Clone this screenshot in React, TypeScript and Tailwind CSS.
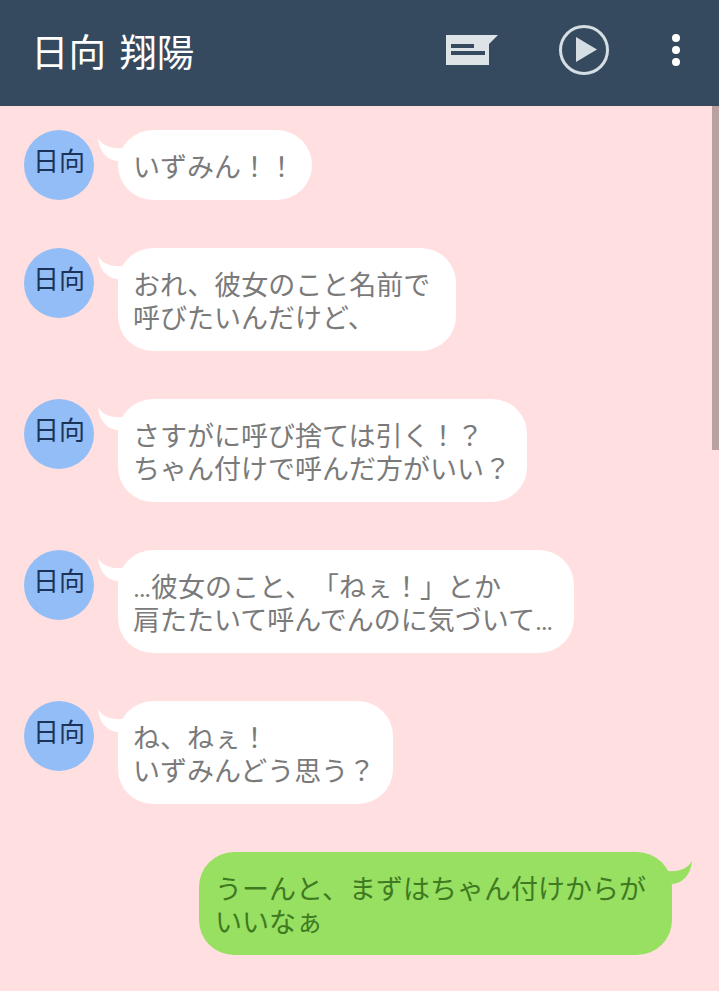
interface Message {
  id: number;
  lines: string[];
  widthClass: string;
}

const messages: Message[] = [
  { id: 1, lines: ['いずみん！！'], widthClass: 'w-[194px]' },
  { id: 2, lines: ['おれ、彼女のこと名前で', '呼びたいんだけど、'], widthClass: 'w-[338px]' },
  { id: 3, lines: ['さすがに呼び捨ては引く！？', 'ちゃん付けで呼んだ方がいい？'], widthClass: 'w-[409px]' },
  { id: 4, lines: ['…彼女のこと、「ねぇ！」とか', '肩たたいて呼んでんのに気づいて…'], widthClass: 'w-[456px]' },
  { id: 5, lines: ['ね、ねぇ！', 'いずみんどう思う？'], widthClass: 'w-[275px]' },
];

function Header() {
  return (
    <header className="flex h-[106px] items-center bg-[#354a5e] pb-[6px] pl-[31px] text-white">
      <h1 className="flex-1 pt-[7px] text-[37.5px] leading-none [word-spacing:4px]">日向 翔陽</h1>
      <svg width="54" height="32" viewBox="0 0 54 32" className="mr-[58px]">
        <path d="M0 1 H52 L43 10 V31 H0 Z" fill="#dde3e7" />
        <rect x="5" y="10" width="23" height="4" fill="#354a5e" />
        <rect x="5" y="17" width="34" height="4" fill="#354a5e" />
      </svg>
      <svg width="52" height="52" viewBox="0 0 52 52" className="mr-[62px]">
        <circle cx="26" cy="26" r="23.5" fill="none" stroke="#d5dee3" strokeWidth="3" />
        <path d="M18 13 L39 25.5 L18 38 Z" fill="#d5dee3" />
      </svg>
      <div className="mr-[39px] flex flex-col gap-[4px]">
        <span className="h-[8px] w-[8px] rounded-full bg-white" />
        <span className="h-[8px] w-[8px] rounded-full bg-white" />
        <span className="h-[8px] w-[8px] rounded-full bg-white" />
      </div>
    </header>
  );
}

function IncomingBubble({ message }: { message: Message }) {
  return (
    <div className="flex items-start pl-[24px]">
      <div className="flex h-[70px] w-[70px] shrink-0 items-start justify-center rounded-full bg-[#92bdf6] pt-[15px] text-[26px] leading-[34px] text-[#1b3358]">
        日向
      </div>
      <div className={`relative ml-[24px] rounded-[35px] bg-white pb-[15px] pl-[15px] pt-[22px] text-[27px] leading-[33px] text-[#7a7a7a] [text-spacing-trim:space-all] ${message.widthClass}`}>
        <svg width="26" height="28" viewBox="0 0 26 28" className="absolute left-[-21px] top-[7px]">
          <path d="M1 1 C5 8 13 12 25 11 L22 24 C10 24 2 14 1 1 Z" fill="#ffffff" />
        </svg>
        {message.lines.map((line) => (
          <div key={line} className="whitespace-nowrap">{line}</div>
        ))}
      </div>
    </div>
  );
}

export default function App() {
  return (
    <div className="relative h-[991px] w-[719px] overflow-hidden bg-[#ffdfe0] font-['Roboto','Noto_Sans_CJK_JP',sans-serif]">
      <Header />
      <main className="flex flex-col gap-[48px] pt-[24px]">
        {messages.map((message) => (
          <IncomingBubble key={message.id} message={message} />
        ))}
        <div className="flex justify-end pr-[47px]">
          <div className="relative w-[473px] rounded-[35px] bg-[#98e061] pb-[15px] pl-[16px] pt-[22px] text-[27px] leading-[33px] text-[#3f7a22]">
            <svg width="26" height="28" viewBox="0 0 26 28" className="absolute right-[-21px] top-[8px]">
              <path d="M25 1 C21 8 13 12 1 11 L4 24 C16 24 24 14 25 1 Z" fill="#98e061" />
            </svg>
            <div className="whitespace-nowrap">うーんと、まずはちゃん付けからが</div>
            <div className="whitespace-nowrap">いいなぁ</div>
          </div>
        </div>
      </main>
      <div className="absolute right-0 top-[106px] h-[344px] w-[7px] bg-[#b9a1a2]" />
    </div>
  );
}
